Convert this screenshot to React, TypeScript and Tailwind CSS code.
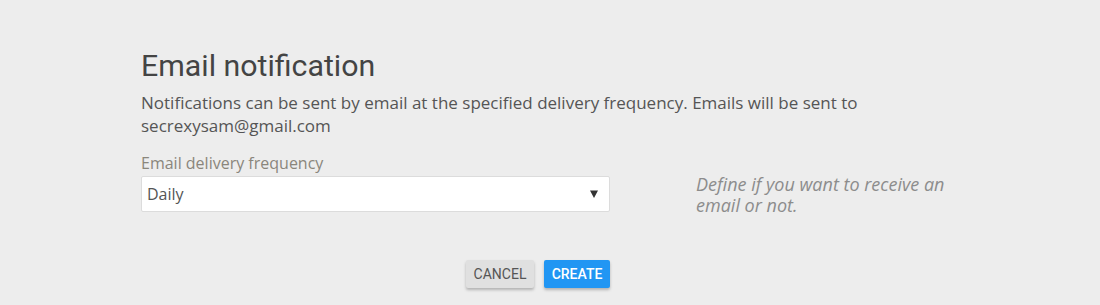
import React from "react";

export default function App() {
  return (
    <div className="w-[1100px] h-[305px] bg-[#ededed] overflow-hidden">
      <div className="ml-[141px] w-[830px] pt-[48px]">
        <h1 className="font-['Roboto'] text-[30.3px] leading-[36px] text-[#444] font-normal">
          Email notification
        </h1>
        <p className="mt-[7px] w-[760px] font-['Open_Sans'] text-[17px] leading-[23px] text-[#555]">
          Notifications can be sent by email at the specified delivery frequency. Emails will be sent to secrexysam@gmail.com
        </p>
        <div className="mt-[15px] flex">
          <div className="w-[469px] shrink-0">
            <div className="font-['Open_Sans'] text-[16px] leading-[22px] text-[#8a867c]">
              Email delivery frequency
            </div>
            <div className="mt-[2px] h-[36px] bg-white border border-[#dcdcdc] rounded-[2px] flex items-center justify-between pl-[5px] pr-[11px]">
              <span className="font-['Open_Sans'] text-[16px] text-[#555]">Daily</span>
              <svg width="8" height="8" viewBox="0 0 8 8">
                <path d="M0 0.5 L8 0.5 L4 8 Z" fill="#333" />
              </svg>
            </div>
          </div>
          <div className="ml-[86px] mt-[22px] w-[275px] shrink-0 font-['Open_Sans'] italic text-[18px] leading-[21px] text-[#8c8c8c]">
            Define if you want to receive an email or not.
          </div>
        </div>
        <div className="w-[794px] mt-[44px] flex justify-center gap-[10px]">
          <button className="h-[28px] w-[68px] rounded-[2px] bg-[#e0e0e0] text-[#555] font-['Roboto'] text-[14px] uppercase shadow-[0_2px_3px_rgba(0,0,0,0.25)]">
            Cancel
          </button>
          <button className="h-[28px] w-[66px] rounded-[2px] bg-[#2196f3] text-white font-['Roboto'] font-medium text-[14px] uppercase shadow-[0_2px_3px_rgba(0,0,0,0.25)]">
            Create
          </button>
        </div>
      </div>
    </div>
  );
}
